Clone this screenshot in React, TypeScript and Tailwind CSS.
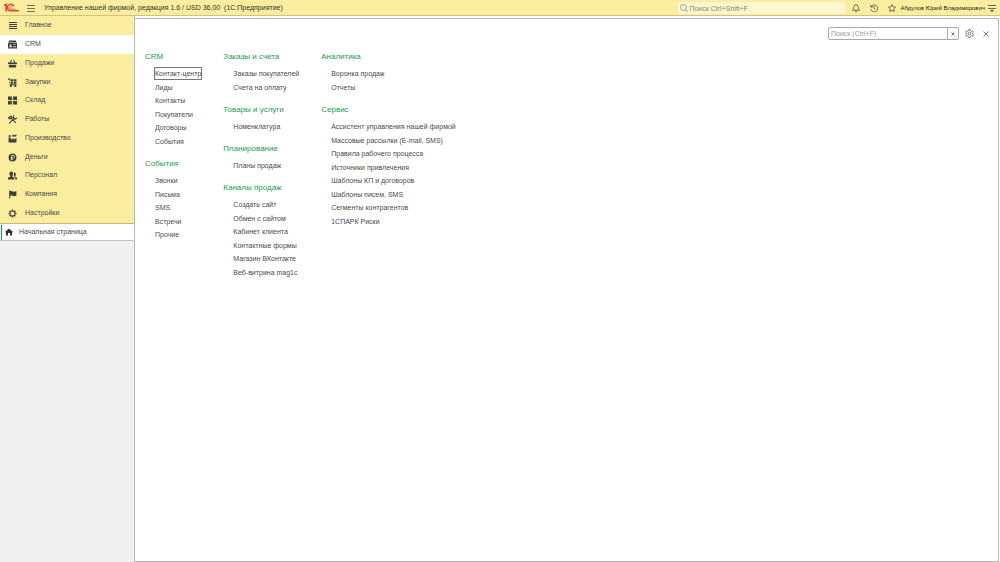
import React from 'react';

type IconProps = { className?: string };

const sections = [
  { label: 'Главное', icon: MainIcon },
  { label: 'CRM', icon: CrmIcon },
  { label: 'Продажи', icon: SalesIcon },
  { label: 'Закупки', icon: CartIcon },
  { label: 'Склад', icon: StockIcon },
  { label: 'Работы', icon: ToolsIcon },
  { label: 'Производство', icon: FactoryIcon },
  { label: 'Деньги', icon: MoneyIcon },
  { label: 'Персонал', icon: StaffIcon },
  { label: 'Компания', icon: FlagIcon },
  { label: 'Настройки', icon: SettingsIcon },
];

const columns = [
  [
    { title: 'CRM', links: ['Контакт-центр', 'Лиды', 'Контакты', 'Покупатели', 'Договоры', 'События'] },
    { title: 'События', links: ['Звонки', 'Письма', 'SMS', 'Встречи', 'Прочие'] },
  ],
  [
    { title: 'Заказы и счета', links: ['Заказы покупателей', 'Счета на оплату'] },
    { title: 'Товары и услуги', links: ['Номенклатура'] },
    { title: 'Планирование', links: ['Планы продаж'] },
    {
      title: 'Каналы продаж',
      links: ['Создать сайт', 'Обмен с сайтом', 'Кабинет клиента', 'Контактные формы', 'Магазин ВКонтакте', 'Веб-витрина mag1c'],
    },
  ],
  [
    { title: 'Аналитика', links: ['Воронка продаж', 'Отчеты'] },
    {
      title: 'Сервис',
      links: [
        'Ассистент управления нашей фирмой',
        'Массовые рассылки (E-mail, SMS)',
        'Правила рабочего процесса',
        'Источники привлечения',
        'Шаблоны КП и договоров',
        'Шаблоны писем, SMS',
        'Сегменты контрагентов',
        '1СПАРК Риски',
      ],
    },
  ],
];

function MainIcon({ className }: IconProps) {
  return (
    <svg className={className} viewBox="0 0 9 9" stroke="currentColor" strokeWidth="1">
      <path d="M1 1.500h8M1 3.500h8M1 5.500h8M1 7.500h8" />
    </svg>
  );
}

function CrmIcon({ className }: IconProps) {
  return (
    <svg className={className} viewBox="0 0 16 16" fill="currentColor" fillRule="evenodd">
      <path d="M2 1h12l1 3H1zM0 5h16v10H0zM3 8v2h3V8zM2 13h5v-2H2zM9 8v1h5V8zM9 11v2h2v-2zM12 11v2h2v-2z" />
    </svg>
  );
}

function SalesIcon({ className }: IconProps) {
  return (
    <svg className={className} viewBox="0 0 16 16" fill="currentColor">
      <path d="M3 6 6 1l1 1-2 4h6L9 2l1-1 3 5h3v3H0V6zM1 10h14l-1 5H2z" />
    </svg>
  );
}

function CartIcon({ className }: IconProps) {
  return (
    <svg className={className} viewBox="0 0 16 16" fill="currentColor">
      <path d="M0 1h4v10h11v2H3V3H0zM5 2h4v4H5zM10 2h5v4h-5zM5 7h4v3H5zM10 7h5v3h-5z" />
      <circle cx="5" cy="14" r="2" />
      <circle cx="13" cy="14" r="2" />
    </svg>
  );
}

function StockIcon({ className }: IconProps) {
  return (
    <svg className={className} viewBox="0 0 16 16" fill="currentColor">
      <path d="M0 1h7v6H0zM9 1h7v6H9zM0 9h7v6H0zM9 9h7v6H9z" />
    </svg>
  );
}

function ToolsIcon({ className }: IconProps) {
  return (
    <svg className={className} viewBox="0 0 16 16" fill="none" stroke="currentColor" strokeWidth="2">
      <path d="m2 15 8-8M5 5l9 9M1 5l4-3 2 2-4 3zM10 2a3 3 0 1 0 5 4l-3 1-2-2z" />
    </svg>
  );
}

function FactoryIcon({ className }: IconProps) {
  return (
    <svg className={className} viewBox="0 0 16 16" fill="currentColor">
      <path d="M1 15V6h4v4l5-3v3l5-3v8zM1 2h4v3H1zM7 3l3-2 1 1 4-1v3l-4 1-2-1-2 1z" />
    </svg>
  );
}

function MoneyIcon({ className }: IconProps) {
  return (
    <svg className={className} viewBox="0 0 16 16">
      <circle cx="8" cy="8" r="7" fill="currentColor" />
      <path d="M6.500 13V4h2.700a2.400 2.400 0 0 1 0 4.800H5M5 11h4" fill="none" stroke="#fbed9e" strokeWidth="1.500" />
    </svg>
  );
}

function StaffIcon({ className }: IconProps) {
  return (
    <svg className={className} viewBox="0 0 16 16" fill="currentColor">
      <path d="M6 1c2 0 3 1.500 3 4 0 1.500-.5 3-1.500 4v1l4 2v3H0v-3l4-2V9C3 8 2.500 6.500 2.500 5 2.500 2.500 4 1 6 1z" />
      <path d="M10 3c3-1 4 1 4 3 0 1-.5 2-1 3v1l3 2v3h-3v-4l-3-2c1-2 1-4 0-6z" />
    </svg>
  );
}

function FlagIcon({ className }: IconProps) {
  return (
    <svg className={className} viewBox="0 0 16 16" fill="currentColor">
      <path d="M2 1h2v14H2zM4 2c3-1 4 1 6 1 2 0 3-1 5-1v8c-2 0-3 1-5 1-2 0-3-2-6-1z" />
    </svg>
  );
}

function SettingsIcon({ className }: IconProps) {
  return (
    <svg className={className} viewBox="0 0 16 16" fill="none" stroke="currentColor">
      <circle cx="8" cy="8" r="4.500" strokeWidth="2" />
      <path d="M8 1v2M8 13v2M1 8h2M13 8h2M3 3l1.500 1.500M11.500 11.500 13 13M3 13l1.500-1.500M11.500 4.500 13 3" strokeWidth="2.400" />
    </svg>
  );
}

function HomeIcon({ className }: IconProps) {
  return (
    <svg className={className} viewBox="0 0 16 16" fill="currentColor">
      <path d="m8 1 8 7-1 1-1-.5V15h-4v-5H6v5H2V8.500L1 9 0 8z" />
    </svg>
  );
}

function Logo() {
  return (
    <svg className="h-[9px] w-[15px]" viewBox="0 0 30 18" fill="none" stroke="#e2453a" role="img" aria-label="1С">
      <path d="M0 5.500 4.500 3v14" strokeWidth="3.400" />
      <path d="M19.500 6.500A6.500 6.500 0 1 0 14 15.500h16" strokeWidth="2.800" />
      <path d="M16 8a2.800 2.800 0 1 0-2 4.300h9" strokeWidth="1.600" />
    </svg>
  );
}

const Header: React.FC = () => (
  <header className="flex h-4 shrink-0 items-center border-b border-[#cfc382] bg-[#fbed9e] pr-1 pl-1">
    <Logo />
    <button aria-label="Меню" className="ml-2 flex">
      <svg className="h-2 w-2" viewBox="0 0 8 8" stroke="#77704c" strokeWidth="1">
        <path d="M0 1.500h8M0 4.500h8M0 7.500h8" />
      </svg>
    </button>
    <h1 className="ml-[9px] pt-px text-[7px] leading-4 whitespace-pre text-[#333]">
      {'Управление нашей фирмой, редакция 1.6 / USD 36,00  (1С:Предприятие)'}
    </h1>
    <label className="ml-auto flex h-3 w-[168px] items-center rounded-xs bg-[#fdf6cf] pl-[2px]">
      <svg className="h-2 w-2 shrink-0" viewBox="0 0 16 16" fill="none" stroke="#777" strokeWidth="1.400">
        <circle cx="7" cy="7" r="6" />
        <path d="m11 11 5 5" />
      </svg>
      <input
        aria-label="Глобальный поиск"
        placeholder="Поиск Ctrl+Shift+F"
        className="h-3 w-full min-w-0 bg-transparent pt-px pl-px text-[7px] outline-none placeholder:text-[#8d8868]"
      />
    </label>
    <div className="ml-[6px] flex items-center gap-[10px]">
      <button aria-label="Уведомления" className="flex">
        <svg className="h-2 w-2" viewBox="0 0 16 16" fill="none" stroke="#444" strokeWidth="1.500">
          <path d="M1 12.500h14c-2-1.500-2.500-3-2.500-6C12.500 3.500 10.500 2 8 2S3.500 3.500 3.500 6.500c0 3-.5 4.500-2.500 6zM6 14.500h4M8 0v2" />
        </svg>
      </button>
      <button aria-label="История" className="flex">
        <svg className="h-2 w-2" viewBox="0 0 16 16" fill="none" stroke="#444" strokeWidth="1.500">
          <path d="M1.500 2v4h4M2 6a7 7 0 1 1-.5 4M8 4v4.500l3 2" />
        </svg>
      </button>
      <button aria-label="Избранное" className="flex">
        <svg className="h-2 w-2" viewBox="0 0 16 16" fill="none" stroke="#444" strokeWidth="1.500">
          <path d="m8 1 2.200 4.800 5 .6-3.700 3.500 1 5.100L8 12.500 3.500 15l1-5.100L.8 6.400l5-.6z" />
        </svg>
      </button>
    </div>
    <span className="ml-1 pt-px text-[6px] leading-4 whitespace-nowrap text-[#222]">Абдулов Юрий Владимирович</span>
    <button aria-label="Сервис и настройки" className="ml-[3px] flex">
      <svg className="h-2 w-2" viewBox="0 0 8 8" stroke="#666" strokeWidth="1">
        <path d="M0 1.500h8M0 4.500h8" />
        <path d="M2 6h4L4 8z" fill="#444" stroke="none" />
      </svg>
    </button>
  </header>
);

const Sidebar: React.FC = () => (
  <aside className="w-[135px] shrink-0 border-r border-[#b5b5b5] bg-[#f0f0f0]">
    <nav className="border-b border-[#c5ba7c] bg-[#fbed9e]">
      {sections.map(({ label, icon: Icon }) => (
        <a
          key={label}
          href="#"
          className={`flex h-[19px] items-center gap-2 pl-2 text-[7px] nth-[4n]:h-[18px] ${label === 'CRM' ? 'bg-white' : ''}`}
        >
          <Icon className="h-[9px] w-[9px] text-[#3f3f3f]" />
          {label}
        </a>
      ))}
    </nav>
    <a href="#" className="flex h-[17px] items-center border-b border-[#c4c4c4] bg-white text-[7px]">
      <span className="ml-px h-[15px] w-px bg-[#169c52]" />
      <HomeIcon className="mr-[6px] ml-[3px] h-2 w-2 text-[#333]" />
      Начальная страница
    </a>
  </aside>
);

const App: React.FC = () => (
  <div className="flex h-screen flex-col overflow-hidden bg-white font-['Liberation_Sans',Arial,sans-serif] text-[#4a4a4a]">
    <Header />
    <div className="flex min-h-0 flex-1">
      <Sidebar />
      <main className="mt-[2px] mr-px flex-1 border-t border-r border-b border-[#b5b5b5]">
        <div className="flex items-center justify-end pt-2 pr-[9px]">
          <div className="flex h-[13px] w-[131px] rounded-xs border border-[#a8a8a8]">
            <input
              aria-label="Поиск по разделу"
              placeholder="Поиск (Ctrl+F)"
              className="min-w-0 flex-1 pt-px pl-[2px] text-[7px] outline-none placeholder:text-[#999]"
            />
            <button aria-label="Очистить" className="flex w-[11px] items-center justify-center border-l border-[#a8a8a8]">
              <svg className="h-1 w-1" viewBox="0 0 8 8" stroke="#555" strokeWidth="1.600">
                <path d="m1 1 6 6M7 1 1 7" />
              </svg>
            </button>
          </div>
          <button aria-label="Настройка навигации" className="ml-[6px] flex">
            <svg className="h-[9px] w-[9px]" viewBox="0 0 18 18" fill="none" stroke="#555" strokeWidth="1.500">
              <path d="M7.500 1h3l.6 2.400 1.800 1 2.300-.7 1.500 2.600L15 8v2l1.700 1.700-1.500 2.600-2.300-.7-1.800 1-.6 2.400h-3l-.6-2.400-1.800-1-2.300.7-1.500-2.600L3 10V8L1.300 6.300l1.500-2.600 2.300.7 1.800-1z" />
              <circle cx="9" cy="9" r="2.700" />
            </svg>
          </button>
          <button aria-label="Закрыть" className="ml-[9px] flex">
            <svg className="h-[6px] w-[6px]" viewBox="0 0 12 12" stroke="#444" strokeWidth="1.500">
              <path d="m1 1 10 10M11 1 1 11" />
            </svg>
          </button>
        </div>
        <div className="flex gap-[22px] pt-[9px] pl-[10px]">
          {columns.map((groups) => (
            <div key={groups[0].title} className="flex flex-col gap-2">
              {groups.map((group) => (
                <section key={group.title}>
                  <h2 className="mb-[2px] text-[8px] leading-4 text-[#169c52]">{group.title}</h2>
                  <ul className="pl-[10px] text-[7px]">
                    {group.links.map((link) => (
                      <li key={link} className="flex items-center odd:h-[13px] even:h-[14px]">
                        <a
                          href="#"
                          className={link === 'Контакт-центр' ? 'leading-[11px] outline outline-[#777]' : 'leading-[11px]'}
                        >
                          {link}
                        </a>
                      </li>
                    ))}
                  </ul>
                </section>
              ))}
            </div>
          ))}
        </div>
      </main>
    </div>
  </div>
);

export default App;
